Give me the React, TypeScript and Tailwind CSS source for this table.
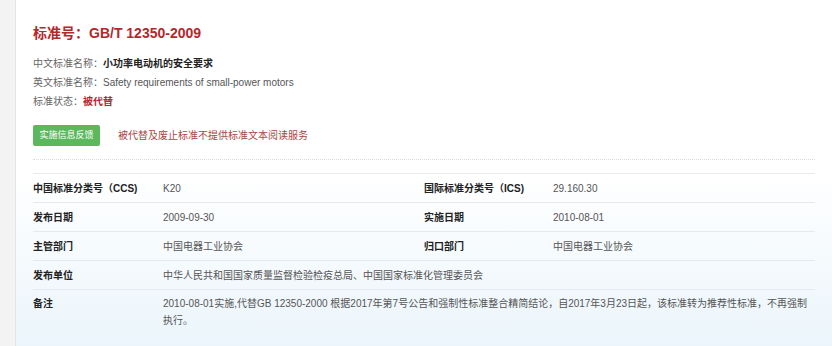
import React from "react";

type Row = { label: string; value: string; label2?: string; value2?: string };

const rows: Row[] = [
  { label: "中国标准分类号（CCS)", value: "K20", label2: "国际标准分类号（ICS)", value2: "29.160.30" },
  { label: "发布日期", value: "2009-09-30", label2: "实施日期", value2: "2010-08-01" },
  { label: "主管部门", value: "中国电器工业协会", label2: "归口部门", value2: "中国电器工业协会" },
  { label: "发布单位", value: "中华人民共和国国家质量监督检验检疫总局、中国国家标准化管理委员会" },
];

export default function App() {
  return (
    <div
      className="flex h-[346px] w-[832px] overflow-hidden text-[10px] text-[#333]"
      style={{ fontFamily: '"Liberation Sans", "Noto Sans CJK SC", sans-serif' }}
    >
      <div className="w-[16px] shrink-0 border-r border-[#e4e4e4] bg-[#f3f3f3]" />
      <div className="flex-1 bg-[linear-gradient(to_bottom,#ffffff_50%,#ebf5fb_100%)] pl-[17px] pr-[17px] pt-[23px]">
        <h1 className="text-[14px] font-bold leading-[20px] text-[#b3282d]">
          标准号：GB/T 12350-2009
        </h1>

        <div className="mt-[11px] leading-[19px]">
          <p>
            <span className="text-[#666]">中文标准名称：</span>
            <span className="font-bold text-[#222]">小功率电动机的安全要求</span>
          </p>
          <p>
            <span className="text-[#666]">英文标准名称：</span>
            <span className="text-[#555]">Safety requirements of small-power motors</span>
          </p>
          <p>
            <span className="text-[#666]">标准状态：</span>
            <span className="font-bold text-[#b3282d]">被代替</span>
          </p>
        </div>

        <div className="mt-[14px] flex items-center gap-[18px]">
          <button
            type="button"
            className="h-[21px] w-[67px] rounded-[2px] bg-[#5cb85c] text-[9px] text-white"
          >
            实施信息反馈
          </button>
          <span className="text-[10px] text-[#a94442]">被代替及废止标准不提供标准文本阅读服务</span>
        </div>

        <div className="mt-[13px] border-t border-dotted border-[#dcdcdc]" />

        <table className="mt-[13px] w-full table-fixed border-collapse text-left">
          <colgroup>
            <col className="w-[130px]" />
            <col className="w-[261px]" />
            <col className="w-[129px]" />
            <col />
          </colgroup>
          <tbody>
            {rows.map((r) => (
              <tr key={r.label} className="h-[29px] border-t border-[#e6eaee]">
                <td className="font-bold text-[#222]">{r.label}</td>
                {r.label2 ? (
                  <>
                    <td className="text-[#555]">{r.value}</td>
                    <td className="font-bold text-[#222]">{r.label2}</td>
                    <td className="text-[#555]">{r.value2}</td>
                  </>
                ) : (
                  <td colSpan={3} className="text-[#555]">
                    {r.value}
                  </td>
                )}
              </tr>
            ))}
            <tr className="border-t border-[#e6eaee] align-top">
              <td className="pt-[5px] font-bold leading-[17px] text-[#222]">备注</td>
              <td colSpan={3} className="pt-[5px] leading-[17px] text-[#555]">
                <div className="whitespace-nowrap">
                  2010-08-01实施,代替GB 12350-2000 根据2017年第7号公告和强制性标准整合精简结论，自2017年3月23日起，该标准转为推荐性标准，不再强制
                </div>
                <div>执行。</div>
              </td>
            </tr>
          </tbody>
        </table>
      </div>
    </div>
  );
}
